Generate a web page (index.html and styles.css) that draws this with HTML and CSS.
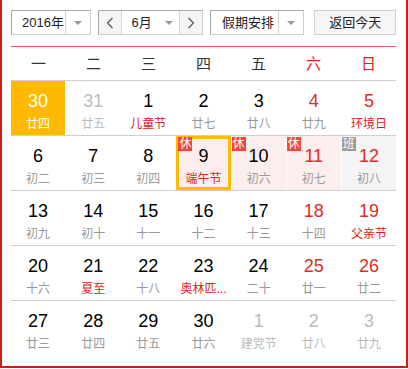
FILE: index.html
```html
<!DOCTYPE html>
<html lang="zh-CN">
<head>
<meta charset="utf-8">
<link rel="stylesheet" href="styles.css">
</head>
<body>
<div class="frame">
  <div class="toolbar">
    <div class="sel sel-year">
      <span class="sel-text">2016年</span>
      <span class="sel-drop"><span class="tri"></span></span>
    </div>
    <div class="sel sel-month">
      <span class="nav nav-prev"><svg width="8" height="12" viewBox="0 0 8 12"><path d="M6.5 1 L1.5 6 L6.5 11" fill="none" stroke="#555" stroke-width="1.2"/></svg></span>
      <span class="sel-text month-text">6月</span>
      <span class="month-drop"><span class="tri"></span></span>
      <span class="nav nav-next"><svg width="8" height="12" viewBox="0 0 8 12"><path d="M1.5 1 L6.5 6 L1.5 11" fill="none" stroke="#555" stroke-width="1.2"/></svg></span>
    </div>
    <div class="sel sel-holiday">
      <span class="sel-text holiday-text">假期安排</span>
      <span class="sel-drop"><span class="tri"></span></span>
    </div>
    <div class="btn-today">返回今天</div>
  </div>
  <div class="week-head">
    <span>一</span><span>二</span><span>三</span><span>四</span><span>五</span><span class="wk">六</span><span class="wk">日</span>
  </div>
  <div class="grid">
    <div class="row">
      <div class="cell today"><span class="num">30</span><span class="lunar">廿四</span></div>
      <div class="cell other"><span class="num">31</span><span class="lunar">廿五</span></div>
      <div class="cell"><span class="num">1</span><span class="lunar fest">儿童节</span></div>
      <div class="cell"><span class="num">2</span><span class="lunar">廿七</span></div>
      <div class="cell"><span class="num">3</span><span class="lunar">廿八</span></div>
      <div class="cell wkend"><span class="num">4</span><span class="lunar">廿九</span></div>
      <div class="cell wkend"><span class="num">5</span><span class="lunar fest">环境日</span></div>
    </div>
    <div class="row">
      <div class="cell"><span class="num">6</span><span class="lunar">初二</span></div>
      <div class="cell"><span class="num">7</span><span class="lunar">初三</span></div>
      <div class="cell"><span class="num">8</span><span class="lunar">初四</span></div>
      <div class="cell rest selected"><span class="badge">休</span><span class="num">9</span><span class="lunar fest">端午节</span></div>
      <div class="cell rest"><span class="badge">休</span><span class="num">10</span><span class="lunar">初六</span></div>
      <div class="cell rest wkend"><span class="badge">休</span><span class="num">11</span><span class="lunar">初七</span></div>
      <div class="cell work wkend"><span class="badge badge-work">班</span><span class="num">12</span><span class="lunar">初八</span></div>
    </div>
    <div class="row">
      <div class="cell"><span class="num">13</span><span class="lunar">初九</span></div>
      <div class="cell"><span class="num">14</span><span class="lunar">初十</span></div>
      <div class="cell"><span class="num">15</span><span class="lunar">十一</span></div>
      <div class="cell"><span class="num">16</span><span class="lunar">十二</span></div>
      <div class="cell"><span class="num">17</span><span class="lunar">十三</span></div>
      <div class="cell wkend"><span class="num">18</span><span class="lunar">十四</span></div>
      <div class="cell wkend"><span class="num">19</span><span class="lunar fest">父亲节</span></div>
    </div>
    <div class="row">
      <div class="cell"><span class="num">20</span><span class="lunar">十六</span></div>
      <div class="cell"><span class="num">21</span><span class="lunar fest">夏至</span></div>
      <div class="cell"><span class="num">22</span><span class="lunar">十八</span></div>
      <div class="cell"><span class="num">23</span><span class="lunar fest">奥林匹...</span></div>
      <div class="cell"><span class="num">24</span><span class="lunar">二十</span></div>
      <div class="cell wkend"><span class="num">25</span><span class="lunar">廿一</span></div>
      <div class="cell wkend"><span class="num">26</span><span class="lunar">廿二</span></div>
    </div>
    <div class="row">
      <div class="cell"><span class="num">27</span><span class="lunar">廿三</span></div>
      <div class="cell"><span class="num">28</span><span class="lunar">廿四</span></div>
      <div class="cell"><span class="num">29</span><span class="lunar">廿五</span></div>
      <div class="cell"><span class="num">30</span><span class="lunar">廿六</span></div>
      <div class="cell other"><span class="num">1</span><span class="lunar">建党节</span></div>
      <div class="cell other"><span class="num">2</span><span class="lunar">廿八</span></div>
      <div class="cell other"><span class="num">3</span><span class="lunar">廿九</span></div>
    </div>
  </div>
</div>
</body>
</html>
```

FILE: styles.css
```css
html, body {
  margin: 0;
  padding: 0;
  background: #fff;
}
body {
  font-family: "Liberation Sans", Arial, "Noto Sans CJK SC", sans-serif;
  color: #333;
}
.frame {
  box-sizing: border-box;
  width: 408px;
  height: 368px;
  border: 2px solid #cc1f1a;
  border-top: none;
  padding: 10px 10px 0 9px;
}
.toolbar {
  display: flex;
  height: 25px;
  padding-bottom: 11px;
  border-bottom: 1px solid #e95a50;
}
.sel {
  display: flex;
  align-items: stretch;
  box-sizing: border-box;
  height: 25px;
  border: 1px solid;
  border-color: #a8a8a8 #cfcfcf #cfcfcf #a8a8a8;
  background: #fff;
  font-size: 13px;
  line-height: 23px;
}
.sel-year { width: 80px; }
.sel-month { width: 106px; margin-left: 7px; }
.sel-holiday { width: 95px; margin-left: 7px; }
.sel-text {
  flex: 1;
  padding-left: 10px;
  color: #222;
}
.sel-drop {
  width: 24px;
  border-left: 1px solid #d4d4d4;
  display: flex;
  align-items: center;
  justify-content: center;
}
.tri {
  width: 0;
  height: 0;
  border-left: 4px solid transparent;
  border-right: 4px solid transparent;
  border-top: 4px solid #999;
}
.nav {
  width: 22px;
  display: flex;
  align-items: center;
  justify-content: center;
  background: #f4f4f4;
}
.nav-prev { border-right: 1px solid #d4d4d4; }
.nav-next { border-left: 1px solid #d4d4d4; }
.month-text { padding-left: 10px; flex: 1; }
.month-drop {
  width: 20px;
  display: flex;
  align-items: center;
  justify-content: center;
}
.holiday-text { padding-left: 11px; }
.btn-today {
  margin-left: 10px;
  width: 82px;
  box-sizing: border-box;
  height: 25px;
  border: 1px solid #d0d0d0;
  background: #f6f6f6;
  font-size: 13px;
  line-height: 23px;
  text-align: center;
  color: #222;
}
.week-head {
  display: grid;
  grid-template-columns: repeat(7, 1fr);
  height: 33px;
  line-height: 33px;
  font-size: 15px;
  text-align: center;
  color: #333;
}
.week-head .wk { color: #e02020; }
.grid {
  display: flex;
  flex-direction: column;
}
.row {
  display: grid;
  grid-template-columns: repeat(7, 1fr);
  column-gap: 1px;
  border-top: 1px solid #cfcfcf;
  height: 54px;
}
.cell {
  position: relative;
  display: flex;
  flex-direction: column;
  align-items: center;
  box-sizing: border-box;
  height: 54px;
}
.num {
  font-size: 18px;
  line-height: 20px;
  margin-top: 10px;
  color: #000;
}
.lunar {
  font-size: 12px;
  line-height: 16px;
  margin-top: 5px;
  color: #999;
  white-space: nowrap;
}
.lunar.fest { color: #e02020; }
.wkend .num { color: #e02b2b; }
.other .num, .other .lunar { color: #bbb; }
.today { background: #ffb900; }
.today .num, .today .lunar { color: #fff; }
.rest { background: #fdeeee; }
.work { background: #f4f4f4; }
.selected {
  border: 3px solid #ffbb00;
}
.selected .num { margin-top: 7px; }
.badge {
  position: absolute;
  left: 0;
  top: 1px;
  width: 14px;
  height: 14px;
  background: #f3463e;
  color: #fff;
  font-size: 12px;
  line-height: 14px;
  text-align: center;
}
.selected .badge { left: -1px; top: -2px; }
.badge-work { background: #9a9a9a; }
```
